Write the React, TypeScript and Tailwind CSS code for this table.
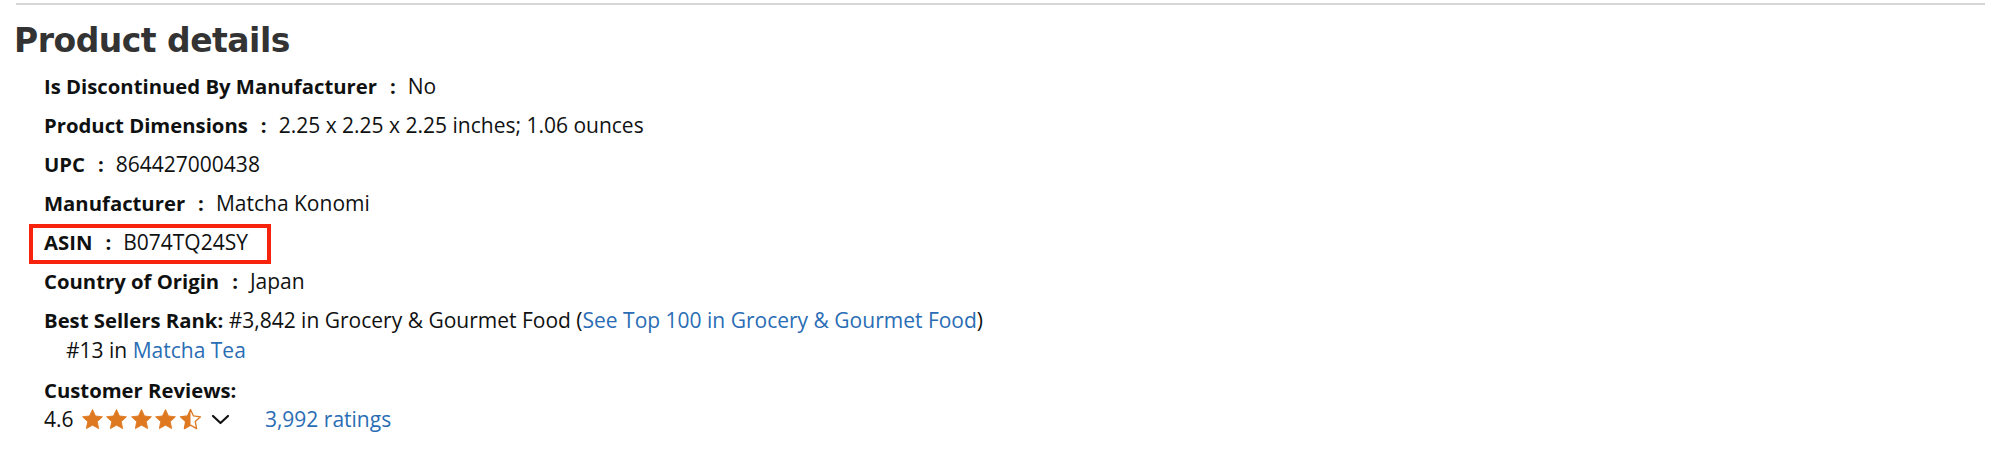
import React from "react";

const STAR_POINTS =
  "12,1.6 15.1,8.3 22.4,9.2 17,14.2 18.4,21.5 12,17.9 5.6,21.5 7,14.2 1.6,9.2 8.9,8.3";

function Star({ half = false }: { half?: boolean }) {
  return (
    <svg width="23" height="23" viewBox="0 0 24 24" className="block">
      {half ? (
        <>
          <defs>
            <clipPath id="halfclip">
              <rect x="0" y="0" width="12" height="24" />
            </clipPath>
          </defs>
          <polygon
            points={STAR_POINTS}
            fill="none"
            stroke="#de7921"
            strokeWidth="1.4"
            strokeLinejoin="round"
          />
          <polygon points={STAR_POINTS} fill="#de7921" clipPath="url(#halfclip)" />
        </>
      ) : (
        <polygon
          points={STAR_POINTS}
          fill="#de7921"
          stroke="#de7921"
          strokeWidth="0.9"
          strokeLinejoin="round"
        />
      )}
    </svg>
  );
}

function Row({ label, value }: { label: string; value: string }) {
  return (
    <li className="leading-[30px]">
      <span className="font-bold text-[20.3px]">{label}</span>
      <span className="font-bold text-[20.3px] ml-[13px] mr-[12px]">:</span>
      <span>{value}</span>
    </li>
  );
}

export default function App() {
  return (
    <div
      className="w-[1999px] h-[472px] bg-white overflow-hidden pt-[3px] pl-[14px] pr-[14px] text-[#0f1111]"
      style={{ fontFamily: '"Open Sans", "Liberation Sans", sans-serif' }}
    >
      <div className="ml-[2px] h-[2px] bg-[#d6d6d6]" />
      <h2
        className="mt-[16px] text-[33px] leading-[40px] font-bold text-[#333333] tracking-[-0.5px]"
        style={{ fontFamily: '"DejaVu Sans", "Liberation Sans", sans-serif' }}
      >
        Product details
      </h2>
      <ul className="mt-[10px] pl-[30px] flex flex-col gap-[9px] text-[21px] leading-[30px]">
        <Row label="Is Discontinued By Manufacturer" value="No" />
        <Row label="Product Dimensions" value="2.25 x 2.25 x 2.25 inches; 1.06 ounces" />
        <Row label="UPC" value="864427000438" />
        <Row label="Manufacturer" value="Matcha Konomi" />
        <li className="leading-[30px] relative">
          <span className="font-bold text-[20.3px]">ASIN</span>
          <span className="font-bold text-[20.3px] ml-[13px] mr-[12px]">:</span>
          <span>B074TQ24SY</span>
          <div className="absolute left-[-15px] top-[-3px] w-[242px] h-[40px] border-[4px] border-[#f7230c] pointer-events-none" />
        </li>
        <Row label="Country of Origin" value="Japan" />
        <li className="leading-[30px] mb-[1px]">
          <div>
            <span className="font-bold text-[20.3px]">Best Sellers Rank:</span>
            <span> #3,842 in Grocery &amp; Gourmet Food (</span>
            <a className="text-[#2a6db5]">See Top 100 in Grocery &amp; Gourmet Food</a>
            <span>)</span>
          </div>
          <ul className="ml-[22px]">
            <li>
              #13 in <a className="text-[#2a6db5]">Matcha Tea</a>
            </li>
          </ul>
        </li>
        <li className="leading-[30px]">
          <div>
            <span className="font-bold text-[20.3px]">Customer Reviews:</span>
          </div>
          <div className="flex items-center h-[29px]">
            <span className="leading-[29px]">4.6</span>
            <div className="flex items-center gap-[1.6px] ml-[7px]">
              <Star />
              <Star />
              <Star />
              <Star />
              <Star half />
            </div>
            <svg width="19" height="11" viewBox="0 0 19 11" className="ml-[9px]">
              <path
                d="M2 2 L9.5 9 L17 2"
                fill="none"
                stroke="#111111"
                strokeWidth="2.2"
                strokeLinecap="round"
                strokeLinejoin="round"
              />
            </svg>
            <a className="ml-[35px] leading-[29px] text-[#2a6db5]">3,992 ratings</a>
          </div>
        </li>
      </ul>
    </div>
  );
}
